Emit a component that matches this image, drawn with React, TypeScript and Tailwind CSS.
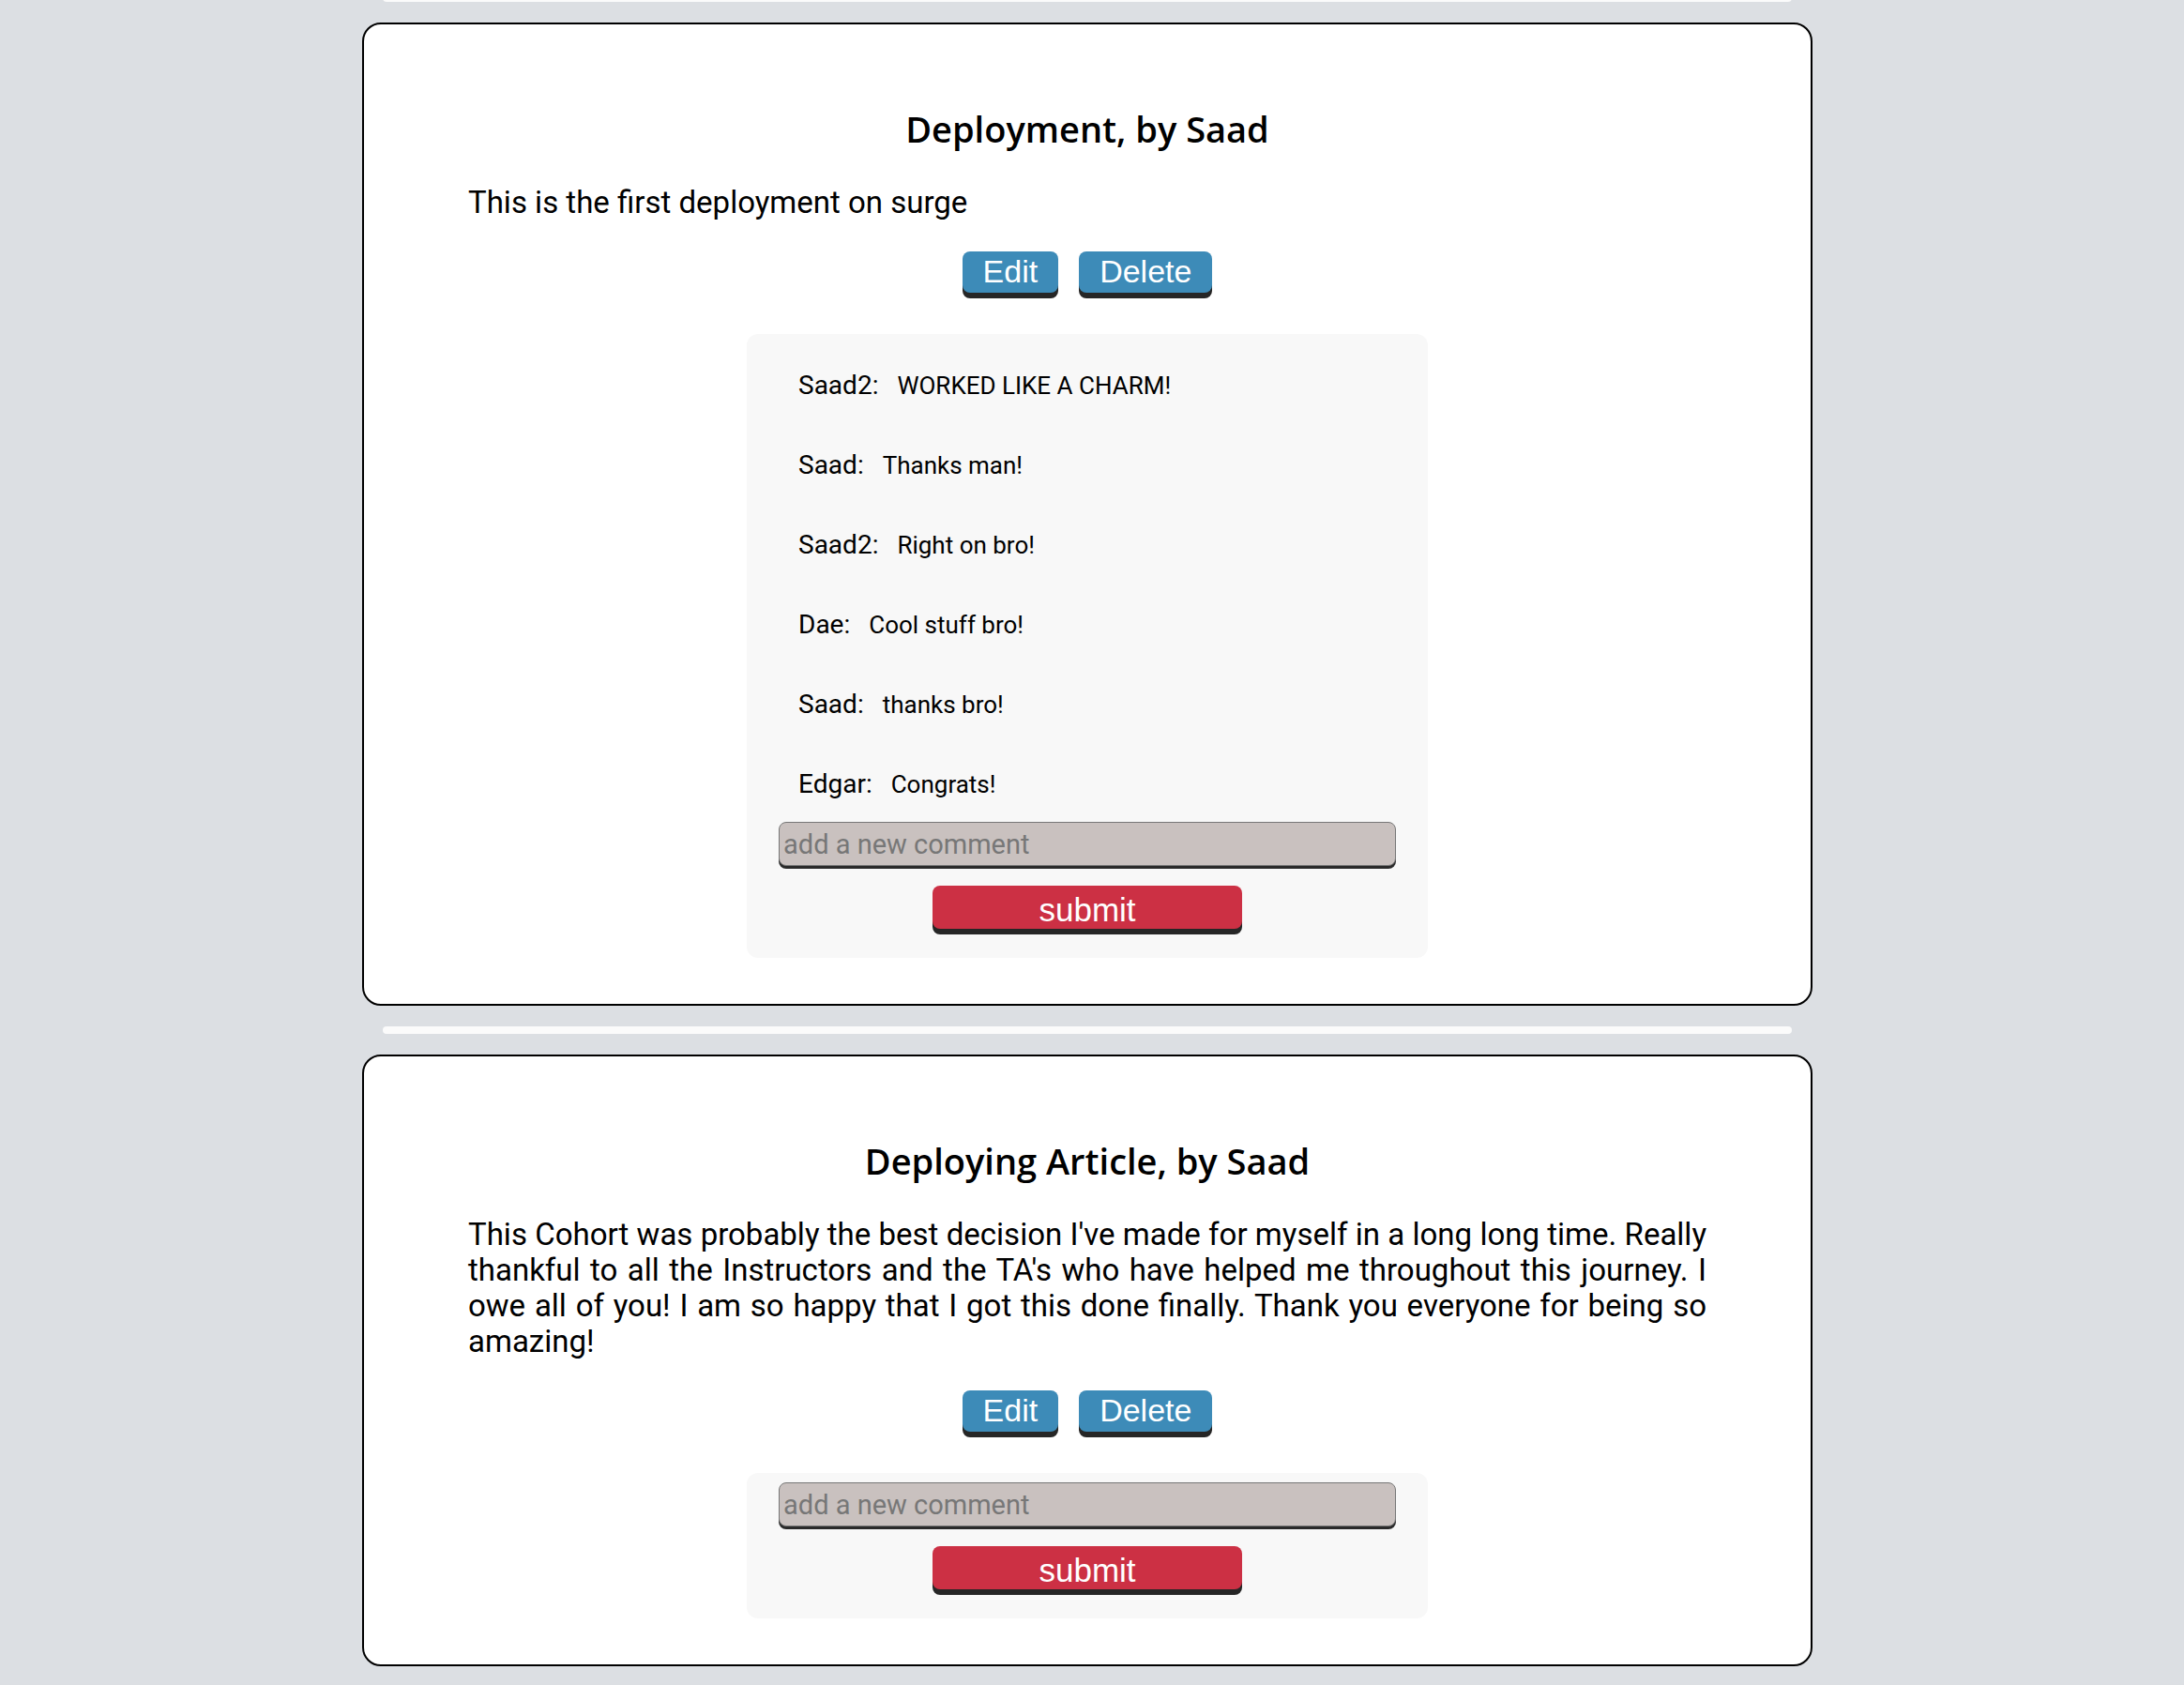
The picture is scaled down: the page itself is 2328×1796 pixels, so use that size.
import React from 'react';

type Post = {
  title: string;
  body: string;
  comments: [string, string][];
};

const posts: Post[] = [
  {
    title: 'Deployment, by Saad',
    body: 'This is the first deployment on surge',
    comments: [
      ['Saad2', 'WORKED LIKE A CHARM!'],
      ['Saad', 'Thanks man!'],
      ['Saad2', 'Right on bro!'],
      ['Dae', 'Cool stuff bro!'],
      ['Saad', 'thanks bro!'],
      ['Edgar', 'Congrats!'],
    ],
  },
  {
    title: 'Deploying Article, by Saad',
    body: "This Cohort was probably the best decision I've made for myself in a long long time. Really thankful to all the Instructors and the TA's who have helped me throughout this journey. I owe all of you! I am so happy that I got this done finally. Thank you everyone for being so amazing!",
    comments: [],
  },
];

function Divider({ className = '' }: { className?: string }) {
  return <div className={`h-[8px] w-[1502px] rounded-full bg-[#fbfbfb] ${className}`} />;
}

function PostCard({ post }: { post: Post }) {
  return (
    <div className="w-[1546px] rounded-[20px] border-2 border-black bg-white px-[111px] pt-[84px] pb-[49px]">
      <h2 className="text-center font-['Open_Sans',sans-serif] text-[38px] font-semibold leading-[54px] text-black">
        {post.title}
      </h2>
      <p className="mt-[33px] text-justify font-['Roboto',sans-serif] text-[33px] leading-[38px] text-black">
        {post.body}
      </p>

      <div className="mt-[33px] flex justify-center gap-[22px]">
        <button className="h-[44px] rounded-[8px] bg-[#3d8bb8] px-[22px] pb-[3px] font-['Liberation_Sans',Arial,sans-serif] text-[34px] leading-[40px] text-white shadow-[0_6px_0_#262626]">
          Edit
        </button>
        <button className="h-[44px] rounded-[8px] bg-[#3d8bb8] px-[22px] pb-[3px] font-['Liberation_Sans',Arial,sans-serif] text-[34px] leading-[40px] text-white shadow-[0_6px_0_#262626]">
          Delete
        </button>
      </div>

      {/* comments */}
      <div className="mx-auto mt-[44px] w-[726px] rounded-[12px] bg-[#f8f8f8] px-[34px] pt-[10px] pb-[31px] font-['Roboto',sans-serif] text-black">
        {post.comments.map(([name, text], i) => (
          <div key={i} className="h-[85px] pt-[29px] pl-[21px]">
            <div className="flex items-baseline gap-[20px] leading-[32px]">
              <span className="text-[28px]">{name}:</span>
              <span className="text-[26px]">{text}</span>
            </div>
          </div>
        ))}
        <input
          placeholder="add a new comment"
          className="block h-[47px] w-full rounded-[8px] border border-[#777] bg-[#c9c1bf] pl-[4px] text-[29px] text-black shadow-[0_3px_0_#2a2a2a] outline-none placeholder:text-[#777]"
        />
        <button className="mx-auto mt-[21px] block h-[46px] w-[330px] rounded-[8px] bg-[#cc3044] font-['Liberation_Sans',Arial,sans-serif] text-[35px] text-white shadow-[0_6px_0_#262626]">
          submit
        </button>
      </div>
    </div>
  );
}

export default function App() {
  return (
    <div className="min-h-screen bg-[#dcdfe3] pr-[10px]">
      <div className="flex flex-col items-center gap-[22px]">
        <Divider className="-mt-[6px]" />
        {posts.map((post, i) => (
          <React.Fragment key={i}>
            {i > 0 && <Divider />}
            <PostCard post={post} />
          </React.Fragment>
        ))}
        <Divider />
      </div>
    </div>
  );
}
